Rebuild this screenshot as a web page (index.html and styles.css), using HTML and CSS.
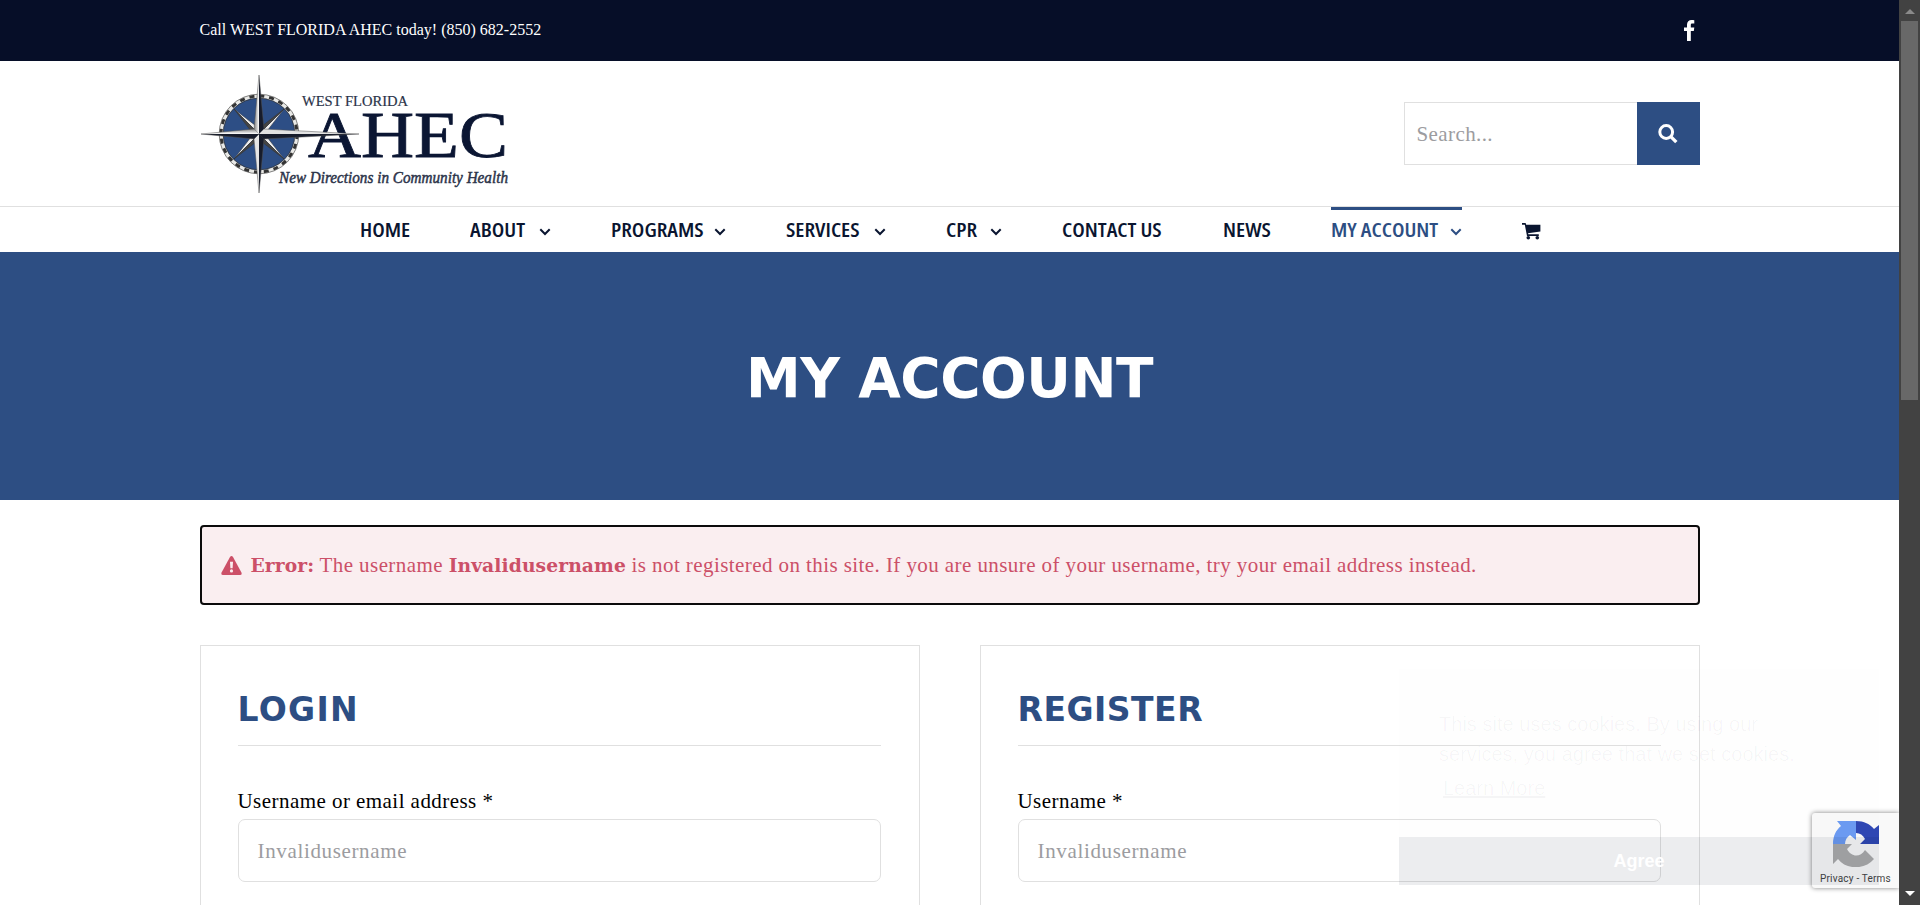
FILE: index.html
```
<!DOCTYPE html>
<html lang="en">
<head>
<meta charset="utf-8">
<title>My Account - West Florida AHEC</title>
<link rel="stylesheet" href="styles.css">
</head>
<body>
<svg class="defs" width="0" height="0">
  <symbol id="chev" viewBox="0 0 12 8"><path d="M1.3 1.3 6 6 10.700 1.300" fill="none" stroke="currentColor" stroke-width="2"/></symbol>
</svg>
<div class="page">
  <div class="topbar"><div class="wrap topbar-in">
    <span class="call">Call WEST FLORIDA AHEC today! <span class="phone">(850) 682-2552</span></span>
    <svg class="fb" viewBox="0 0 11 21"><path d="M10.300.2V3.600H8.300C7 3.600 6.800 4.300 6.800 5.200V7.500H10.300L9.800 11H6.800V21H3V11H0V7.500H3V4.800C3 1.700 4.900 0 7.600 0 8.900 0 9.900.1 10.300.2Z" fill="#fff"/></svg>
  </div></div>
  <header class="wrap header">
    <svg class="logo" viewBox="0 0 320 130" width="320" height="130">
      <defs>
        <linearGradient id="s1" x1="0" x2="1"><stop offset="0" stop-color="#777"/><stop offset="1" stop-color="#fff"/></linearGradient>
        <linearGradient id="s2" x1="0" y1="0" x2="0" y2="1"><stop offset="0" stop-color="#888"/><stop offset="1" stop-color="#fff"/></linearGradient>
      </defs>
      <circle cx="59" cy="63" r="38" fill="#2d4e85" stroke="#e9e9e6" stroke-width="4"/>
      <circle cx="59" cy="63" r="38" fill="none" stroke="#333" stroke-width="3" stroke-dasharray="5 4.950"/>
      <circle cx="59" cy="63" r="39.800" fill="none" stroke="#555" stroke-width=".7"/>
      <circle cx="59" cy="63" r="35.800" fill="none" stroke="#333" stroke-width=".7"/>
      <g stroke="#333" stroke-width=".5">
        <path d="M34 38 56 55 59 63Z" fill="#eee"/><path d="M34 38 59 63 51 60Z" fill="#444"/>
        <path d="M84 38 67 60 59 63Z" fill="#eee"/><path d="M84 38 59 63 62 55Z" fill="#444"/>
        <path d="M34 88 51 66 59 63Z" fill="#eee"/><path d="M34 88 56 71 59 63Z" fill="#444"/>
        <path d="M84 88 67 66 59 63Z" fill="#eee"/><path d="M84 88 59 63 62 71Z" fill="#444"/>
      </g>
      <text x="102" y="34.500" class="lg-west" textLength="106" lengthAdjust="spacingAndGlyphs">WEST FLORIDA</text>
      <text x="108" y="86" class="lg-ahec" textLength="200" lengthAdjust="spacingAndGlyphs">AHEC</text>
      <path d="M59 4 54 58 59 63Z" fill="url(#s1)"/><path d="M59 4 64 58 59 63Z" fill="#171c2b"/>
      <path d="M59 122 54 68 59 63Z" fill="#e6e6e6"/><path d="M59 122 64 68 59 63Z" fill="#171c2b"/>
      <path d="M1 63 54 58 59 63Z" fill="url(#s2)"/><path d="M1 63 54 68 59 63Z" fill="#171c2b"/>
      <path d="M159 63 64 58 59 63Z" fill="#e2e2e2"/><path d="M159 63 64 68 59 63Z" fill="#171c2b"/>
      <path d="M59 4 54 58 1 63 54 68 59 122 64 68 159 63 64 58Z" fill="none" stroke="#555" stroke-width=".5"/>
      <text x="79" y="112" class="lg-tag" textLength="229" lengthAdjust="spacingAndGlyphs">New Directions in Community Health</text>
    </svg>
    <div class="search">
      <div class="search-field">Search...</div>
      <div class="search-btn"><svg viewBox="0 0 20 20" width="20" height="20"><circle cx="8.200" cy="8" r="6.400" fill="none" stroke="#fff" stroke-width="3"/><path d="M12.800 12.600 18.300 18.200" stroke="#fff" stroke-width="3.300"/></svg></div>
    </div>
  </header>
  <nav class="nav">
    <a class="w1"><span>HOME</span></a>
    <a class="w2"><span>ABOUT</span><svg><use href="#chev"/></svg></a>
    <a class="w3"><span>PROGRAMS</span><svg><use href="#chev"/></svg></a>
    <a class="w4"><span>SERVICES</span><svg><use href="#chev"/></svg></a>
    <a class="w5"><span>CPR</span><svg><use href="#chev"/></svg></a>
    <a class="w6"><span>CONTACT US</span></a>
    <a class="w7"><span>NEWS</span></a>
    <a class="w8 active"><span>MY ACCOUNT</span><svg><use href="#chev"/></svg></a>
    <a class="w9"><svg class="cart" viewBox="0 0 19 17"><path d="M0 0H3.600L4.200 1.800H18.400V8.500L6 10.200 6.300 11.300H16.800V13H5L2.800 1.700H0Z" fill="#0a1530"/><circle cx="6.300" cy="14.800" r="1.800" fill="#0a1530"/><circle cx="15.300" cy="14.800" r="1.800" fill="#0a1530"/></svg></a>
  </nav>
  <section class="banner"><h1>MY ACCOUNT</h1></section>
  <main class="wrap">
    <div class="alert">
      <svg viewBox="0 0 21 19" width="21" height="19"><path d="M10.500 0Q11.400 0 12 1L20.700 17Q21 19 19.300 19H1.700Q0 19 .3 17L9 1Q9.600 0 10.500 0Z" fill="#cc5068"/><path d="M9 5.800H12L11.600 12.200H9.400Z" fill="#faeef0"/><circle cx="10.500" cy="14.900" r="1.600" fill="#faeef0"/></svg>
      <p><b>Error:</b> The username <b>Invalidusername</b> is not registered on this site. If you are unsure of your username, try your email address instead.</p>
    </div>
    <div class="cols">
      <section class="card"><h2 class="login">LOGIN</h2><label>Username or email address *</label><div class="input">Invalidusername</div></section>
      <section class="card"><h2 class="register">REGISTER</h2><label>Username *</label><div class="input">Invalidusername</div></section>
    </div>
  </main>
</div>
<div class="captcha">
  <svg viewBox="0 0 46 46" width="46" height="46">
    <path d="M0 23C0 15 3 9 8 5L4 0H23V19L17 14C14 16 12 19 12 23Z" fill="#6c9bf2"/>
    <path d="M23 0C31 0 37 3 41 8L46 4V23H27L32 18C30 14 27 12 23 12Z" fill="#3048b4"/>
    <path d="M0 23H19L14 28C18 36 27 37 32 29L41 38C32 49 13 49 5 38L0 43Z" fill="#ababab"/>
  </svg>
  <span>Privacy - Terms</span>
</div>
<div class="cookie">
  <p>This site uses cookies. By using our services, you agree that we set cookies.</p>
  <a>Learn More</a>
  <div class="agree">Agree</div>
</div>
<div class="scrollbar"><i class="up"></i><div class="thumb"></div><i class="down"></i></div>
</body>
</html>
```

FILE: styles.css
```
* { box-sizing: border-box; }
html, body { margin: 0; height: 905px; overflow: hidden; background: #fff; }
body { position: relative; font-family: "Liberation Serif", serif; font-size: 21px; color: #000; }
h1, h2, p { margin: 0; }
.defs { position: absolute; }
.page { width: 1899px; height: 905px; overflow: hidden; }
.wrap { width: 1500px; margin: 0 auto; }
.topbar { height: 61px; background: #060e28; }
.topbar-in { height: 61px; display: flex; justify-content: space-between; align-items: center; padding-right: 5px; }
.call { color: #fff; font-size: 16px; line-height: 20px; white-space: nowrap; padding-bottom: 2px; }
.fb { width: 11px; height: 21px; }
.header { height: 145px; display: flex; justify-content: space-between; padding-top: 10px; }
.lg-west { font-size: 15px; fill: #2b3349; stroke: #2b3349; stroke-width: .2px; }
.lg-ahec { font-size: 66px; fill: #0b1633; stroke: #0b1633; stroke-width: .8px; }
.lg-tag { font-size: 17.5px; font-style: italic; fill: #2b3349; stroke: #2b3349; stroke-width: .5px; }
.search { display: flex; width: 296px; height: 63px; margin-top: 31px; }
.search-field { width: 233px; border: 1px solid #e0e0e0; border-right: 0; padding-left: 12px; line-height: 63px; color: #9c9ca0; letter-spacing: .4px; }
.search-btn { width: 63px; background: #2d4e83; display: flex; align-items: center; justify-content: center; }
.nav { height: 46px; border-top: 1px solid #e0e0e0; display: flex; gap: 60px; padding-left: 359.5px; }
.nav a { height: 45px; display: flex; justify-content: space-between; align-items: center; color: #0a1530; font: 600 19.5px/45px "Open Sans", sans-serif; font-stretch: 75%; white-space: nowrap; }
.nav span { transform: scaleX(1.13); transform-origin: left; }
.nav a svg { flex: none; width: 12px; height: 8px; margin-top: 4px; }
.nav a .cart { width: 19px; height: 17px; margin-top: 3px; }
.nav .active { color: #2d4e83; border-top: 3px solid #2d4e83; line-height: 39px; padding-bottom: 3px; }
.w1 { width: 50px; } .w2 { width: 81px; } .w3 { width: 115px; } .w4 { width: 100px; } .w5 { width: 56px; }
.w6 { width: 101px; } .w7 { width: 48px; } .w8 { width: 131px; } .w9 { width: 19px; }
.banner { height: 248px; background: #2d4e83; display: flex; justify-content: center; align-items: center; }
.banner h1 { font: bold 55px/64px "DejaVu Sans", sans-serif; color: #fff; padding-top: 3px; letter-spacing: -.5px; }
.alert { margin-top: 25px; height: 80px; border: 2px solid #0b0b0b; border-radius: 4px; background: #faeef0; display: flex; align-items: center; gap: 9px; padding-left: 19px; color: #cc5068; white-space: nowrap; letter-spacing: .42px; }
.alert b { font: bold 18.7px "DejaVu Serif", serif; letter-spacing: .1px; }
.cols { display: flex; gap: 60px; margin-top: 40px; }
.card { width: 720px; height: 300px; border: 1px solid #e0e0e0; padding: 37px 38px 37px 37px; display: flex; flex-direction: column; }
.card h2 { font: bold 33px/54px "DejaVu Sans", sans-serif; color: #2d4e83; height: 63px; border-bottom: 1px solid #e0e0e0; }
.login { letter-spacing: 1.3px; }
.register { letter-spacing: .5px; }
.card label { margin-top: 42px; height: 31px; line-height: 26px; letter-spacing: .45px; }
.input { height: 63px; border: 1px solid #e0e0e0; border-radius: 7px; padding-left: 19px; line-height: 62px; color: #9c9ca0; letter-spacing: .65px; }
.captcha { position: absolute; left: 1812px; top: 813px; width: 87px; height: 75px; background: #f9f9f9; border-radius: 3px 0 0 3px; box-shadow: 0 0 5px #808080; clip-path: inset(-8px 0 -8px -8px); padding: 8px 0 0 8px; display: flex; flex-direction: column; }
.captcha svg { margin-left: 13px; }
.captcha span { font: 10px/14px Roboto, sans-serif; color: #444; white-space: nowrap; margin-top: 5px; letter-spacing: .2px; }
.cookie { position: absolute; left: 1399px; top: 669px; width: 480px; height: 216px; background: rgba(0,0,0,.005); padding: 40px 40px 0; font: 20px/30px "Liberation Sans", sans-serif; color: rgba(6,14,40,.035); }
.cookie p { letter-spacing: .03px; }
.cookie a { display: block; margin: 4px 0 0 4px; text-decoration: underline; }
.agree { margin: 34px -40px 0; height: 48px; background: rgba(6,14,40,.07); color: #fff; font: bold 18px/48px "Liberation Sans", sans-serif; text-align: center; }
.scrollbar { position: absolute; left: 1899px; top: 0; width: 21px; height: 905px; background: #424242; display: flex; flex-direction: column; align-items: center; }
.up { border: 5px solid transparent; border-top: 0; border-bottom-color: #8a8a8a; margin-top: 9px; }
.thumb { width: 17px; height: 379px; background: #686868; margin-top: 7px; }
.down { border: 5px solid transparent; border-bottom: 0; border-top-color: #fff; margin-top: auto; margin-bottom: 9px; }
```
